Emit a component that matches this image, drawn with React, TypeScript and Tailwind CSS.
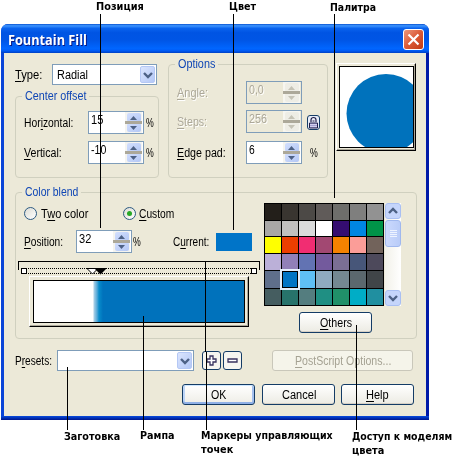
import React, { useLayoutEffect, useRef, useState } from "react";

/* Text squeezed to a given width; "&" marks the underlined mnemonic letter. */
function Fit({ w, children, className = "" }: { w: number; children: string; className?: string }) {
  const ref = useRef<HTMLSpanElement>(null);
  const [scale, setScale] = useState(1);
  useLayoutEffect(() => {
    if (ref.current) setScale(w / ref.current.offsetWidth);
  }, [w]);
  const i = children.indexOf("&");
  return (
    <span className={"block shrink-0 whitespace-nowrap " + className} style={{ width: w }}>
      <span ref={ref} className="inline-block origin-left" style={{ transform: `scaleX(${scale})` }}>
        {i < 0 ? (
          children
        ) : (
          <>
            {children.slice(0, i)}
            <span className="underline decoration-1 underline-offset-[2px]">{children[i + 1]}</span>
            {children.slice(i + 2)}
          </>
        )}
      </span>
    </span>
  );
}

function Chevron({ up = false }: { up?: boolean }) {
  return (
    <svg width="10" height="8" viewBox="0 0 10 8" fill="none" stroke="#4d6185" strokeWidth="2.4">
      <path d={up ? "M1 6 L5 2 L9 6" : "M1 2 L5 6 L9 2"} />
    </svg>
  );
}

function Combo({ className, children }: { className: string; children?: React.ReactNode }) {
  return (
    <div className={"flex h-[21px] shrink-0 items-center justify-between border border-[#7f9db9] bg-white p-px pl-1 " + className}>
      <span>{children}</span>
      <span className="flex h-[17px] w-[15px] items-center justify-center rounded-[2px] border border-[#b5c8f5] bg-linear-to-br from-[#dbe5fe] to-[#b4c8f6]">
        <Chevron />
      </span>
    </div>
  );
}

function Spinner({ value, w, disabled = false }: { value: string; w: number; disabled?: boolean }) {
  const btn =
    "flex h-[9px] w-[14px] items-center justify-center rounded-[2px] " +
    (disabled ? "bg-[#eeede5]" : "bg-linear-to-br from-[#d3dffd] to-[#b3c7f5]");
  const fill = disabled ? "#c5c3b6" : "#4d6185";
  return (
    <div
      className={
        "flex h-[23px] w-[56px] shrink-0 justify-between border border-[#7f9db9] pl-[2px] pr-px " +
        (disabled ? "bg-[#ece9d8] text-[#aca899]" : "bg-white")
      }
    >
      <Fit w={w} className="leading-[16px]">{value}</Fit>
      <div className={"flex w-[17px] flex-col items-center justify-between py-px " + (disabled ? "bg-[#f7f6f0]" : "bg-[#f4f4f0]")}>
        <span className={btn}>
          <svg width="7" height="4" viewBox="0 0 7 4"><path d="M0 4 L3.5 0 L7 4Z" fill={fill} /></svg>
        </span>
        <span className="z-10 -my-1 h-[3px] w-[17px] shrink-0 bg-[#aca899]" />
        <span className={btn}>
          <svg width="7" height="4" viewBox="0 0 7 4"><path d="M0 0 L3.5 4 L7 0Z" fill={fill} /></svg>
        </span>
      </div>
    </div>
  );
}

function Group({ title, w, className, children }: { title: string; w: number; className: string; children: React.ReactNode }) {
  return (
    <div className={"flex shrink-0 flex-col rounded-[4px] border border-[#d0d0bf] " + className}>
      <div className="-mt-[9px] ml-[6px] h-4 self-start bg-[#ece9d8] px-[3px] leading-4 text-[#0f46b5]">
        <Fit w={w}>{title}</Fit>
      </div>
      {children}
    </div>
  );
}

function Button({ label, w, kind = "", className }: { label: string; w: number; kind?: string; className: string }) {
  const look =
    kind === "disabled"
      ? "border-[#c9c7ba] bg-[#f5f4ea] text-[#a5a293]"
      : kind === "default"
        ? "border-[#143c66] bg-linear-to-b from-white to-[#eeede6] shadow-[inset_0_-2px_0_#8fb0e6,inset_0_1px_0_#cee7ff,inset_2px_0_0_#bcd4f6,inset_-2px_0_0_#a4c0ee]"
        : "border-[#143c66] bg-linear-to-b from-white to-[#ecebe3] shadow-[inset_0_-1px_0_#d6d0c5]";
  return (
    <button className={"flex shrink-0 items-center justify-center rounded-[3px] border " + look + " " + className}>
      <Fit w={w}>{label}</Fit>
    </button>
  );
}

function Radio({ on = false }: { on?: boolean }) {
  return (
    <span className="flex size-[13px] shrink-0 items-center justify-center rounded-full border border-[#2c5a82] bg-linear-to-br from-[#dcdcd4] to-white">
      {on && <span className="size-[5px] rounded-full bg-[#27a827]" />}
    </span>
  );
}

const palette = [
  "bg-[#231f1a]", "bg-[#393530]", "bg-[#4c4946]", "bg-[#605b59]", "bg-[#6e6e6b]", "bg-[#7f7f7e]", "bg-[#929292]",
  "bg-[#a8a7a6]", "bg-[#c1c0bf]", "bg-[#dadbdb]", "bg-[#ffffff]", "bg-[#350d70]", "bg-[#0086e2]", "bg-[#009348]",
  "bg-[#ffff00]", "bg-[#ec3e00]", "bg-[#f12d72]", "bg-[#a24872]", "bg-[#f58200]", "bg-[#fb9d98]", "bg-[#72635b]",
  "bg-[#bbb0d8]", "bg-[#9180b8]", "bg-[#6273b3]", "bg-[#735a9d]", "bg-[#7b6f94]", "bg-[#475679]", "bg-[#4d495b]",
  "bg-[#5f6f8b]", "bg-[#0074c4]", "bg-[#5fc0f5]", "bg-[#8fabc0]", "bg-[#748892]", "bg-[#5b686e]", "bg-[#404548]",
  "bg-[#455d60]", "bg-[#27736b]", "bg-[#547d7f]", "bg-[#1f8f83]", "bg-[#209069]", "bg-[#00adc6]", "bg-[#208fa0]",
];

const leaders = [
  "left-[100px] top-[14px] h-[214px]",
  "left-[233px] top-[14px] h-[216px]",
  "left-[334px] top-[14px] h-[184px]",
  "left-[67px] top-[367px] h-[63px]",
  "left-[143px] top-[316px] h-[114px]",
  "left-[205px] top-[261px] h-[91px]",
  "left-[206px] top-[352px] h-[78px]",
  "left-[356px] top-[325px] h-[105px]",
];

export default function App() {
  return (
    <div className="relative h-[459px] w-[456px] overflow-hidden bg-white font-['Liberation_Sans',Arial,sans-serif] text-[12px] leading-[14px] text-black">
      <div className="flex h-[24px] pl-[96px] font-['DejaVu_Sans',sans-serif] text-[11px] font-bold">
        <Fit w={48}>Позиция</Fit>
        <Fit w={27} className="ml-[85px]">Цвет</Fit>
        <Fit w={46} className="ml-[74px] mt-px">Палитра</Fit>
      </div>

      <div className="ml-px flex h-[396px] w-[428px] flex-col overflow-hidden rounded-t-[7px] bg-linear-to-r from-[#0a45d8] via-[#0855dd] to-[#0019a8]">
        <div className="flex h-[29px] shrink-0 items-center justify-between bg-linear-[180deg,#0a52cf_0%,#3d95ff_6%,#0a63ee_15%,#0054e3_30%,#0055e5_55%,#0066ff_85%,#005bf5_92%,#0040c4_100%] pl-[7px] pr-[5px]">
          <Fit w={79} className="mt-[3px] font-['Open_Sans',sans-serif] text-[14px] font-bold text-white [text-shadow:1px_1px_#0a1883]">Fountain Fill</Fit>
          <span className="mt-[2px] flex size-[21px] items-center justify-center rounded-[3px] border border-white bg-linear-to-br from-[#e8967c] via-[#dc5a36] to-[#c03a10]">
            <svg width="13" height="13" viewBox="0 0 13 13" stroke="#fff" strokeWidth="2.2"><path d="M1.5 1.5 L11.5 11.5 M11.5 1.5 L1.5 11.5" /></svg>
          </span>
        </div>

        <div className="mx-[3px] h-[363px] shrink-0 bg-[#ece9d8]">
          <div className="flex h-[128px] pl-[11px] pt-[10px]">
            <div className="w-[144px] pt-px">
              <div className="flex items-center">
                <Fit w={27} className="mr-[10px]">&Type:</Fit>
                <Combo className="w-[105px]"><Fit w={31}>Radial</Fit></Combo>
              </div>
              <Group title="Center offset" w={61} className="mt-[11px] h-[82px] w-[144px]">
                <div className="mt-[7px] flex items-center pl-[8px]">
                  <Fit w={49} className="mr-[15px]">Hor&izontal:</Fit>
                  <Spinner value="15" w={12} />
                  <Fit w={8} className="ml-[2px]">%</Fit>
                </div>
                <div className="mt-[7px] flex items-center pl-[8px]">
                  <Fit w={38} className="mr-[26px]">&Vertical:</Fit>
                  <Spinner value="-10" w={15} />
                  <Fit w={8} className="ml-[2px]">%</Fit>
                </div>
              </Group>
            </div>

            <Group title="Options" w={37} className="ml-[9px] mt-px h-[114px] w-[160px]">
              <div className="mt-[9px] flex items-center pl-[8px] text-[#aca899] [text-shadow:1px_1px_#fff]">
                <Fit w={31} className="mr-[38px]">&Angle:</Fit>
                <Spinner value="0,0" w={15} disabled />
              </div>
              <div className="mt-[6px] flex items-center pl-[8px] text-[#aca899] [text-shadow:1px_1px_#fff]">
                <Fit w={30} className="mr-[39px]">&Steps:</Fit>
                <Spinner value="256" w={18} disabled />
                <span className="ml-[5px] mt-px flex h-[15px] w-[13px] items-center justify-center rounded-[3px] border border-[#163d66] bg-[#e8ecf8]">
                  <svg width="11" height="13" viewBox="0 0 11 13" fill="none" stroke="#22204a">
                    <path d="M3 6 V4 a2.5 2.5 0 0 1 5 0 V6" strokeWidth="1.2" />
                    <path d="M4.5 5 h2" />
                    <path d="M1.5 12 V7 h8 V12Z" fill="#a5a2d0" />
                    <path d="M2 8.5 h7 M2 10.5 h7" stroke="#e6e4fa" strokeWidth=".7" />
                  </svg>
                </span>
              </div>
              <div className="mt-[8px] flex items-center pl-[8px]">
                <Fit w={49} className="mr-[20px]">&Edge pad:</Fit>
                <Spinner value="6" w={6} />
                <Fit w={8} className="ml-[8px]">%</Fit>
              </div>
            </Group>

            <div className="ml-[8px] h-[88px] w-[80px] shrink-0 border border-b-black border-l-white border-r-black border-t-white p-px shadow-[inset_-1px_-1px_#aca899]">
              <div className="ml-px mt-px h-[82px] w-[75px] border border-black bg-white">
                <svg width="73" height="80" viewBox="0 0 73 80"><circle cx="46" cy="46.5" r="39.5" fill="#0072bc" /></svg>
              </div>
            </div>
          </div>

          <Group title="Color blend" w={53} className="ml-[11px] mt-[11px] h-[147px] w-[402px]">
            <div className="flex pt-[2px]">
              <div className="w-[248px]">
                <div className="mt-[4px] flex h-[15px] items-center pl-[8px]">
                  <Radio />
                  <Fit w={47} className="ml-[4px] mr-[35px]">T&wo color</Fit>
                  <Radio on />
                  <Fit w={35} className="ml-[3px] mt-px">&Custom</Fit>
                </div>
                <div className="mt-[9px] flex items-center pl-[8px]">
                  <Fit w={39} className="mr-[13px]">&Position:</Fit>
                  <Spinner value="32" w={12} />
                  <Fit w={8} className="ml-px">%</Fit>
                  <Fit w={36} className="ml-[32px] mr-[7px]">C&urrent:</Fit>
                  <span className="h-[18px] w-[36px] bg-[#0074c8]" />
                </div>
                <svg className="ml-[2px] mt-[8px]" width="243" height="15" viewBox="0 0 243 15" shapeRendering="crispEdges">
                  <path d="M0.5 9 V0.5 H241.5 V9" fill="none" stroke="#000" />
                  <path d="M8 7.5 H233 M8 12.5 H233" stroke="#000" strokeDasharray="1 1" />
                  <rect x="3.5" y="7.5" width="5" height="5" fill="#fff" stroke="#000" />
                  <rect x="233.5" y="7.5" width="5" height="5" fill="#fff" stroke="#000" />
                  <path d="M69 7.5 H80 L74.5 13Z" fill="#fff" stroke="#000" shapeRendering="auto" />
                  <path d="M76 7 H89 L82.5 13.5Z" fill="#000" shapeRendering="auto" />
                </svg>
                <div className="ml-[13px] h-[51px] w-[220px] border border-b-black border-l-white border-r-black border-t-white p-[3px] shadow-[inset_-1px_-1px_#aca899]">
                  <div className="h-[43px] w-[212px] border border-black bg-linear-[90deg,#fff_0,#fff_59px,#a9cfe6_60px,#55a9d8_63px,#078ccb_65px,#0072bc_69px]" />
                </div>
              </div>

              <div className="mt-px w-[140px]">
                <div className="flex">
                  <div className="grid h-[103px] w-[120px] grid-cols-7 gap-px border border-black bg-black">
                    {palette.map((c, i) => (
                      <span key={c} className={c + (i === 29 ? " z-10 border border-black outline-2 outline-[#e4eefa]" : "")} />
                    ))}
                  </div>
                  <div className="ml-px flex h-[103px] w-[16px] flex-col bg-linear-to-r from-[#f2f1e9] to-white">
                    <span className="flex h-[16px] items-center justify-center rounded-[3px] border border-[#a9bff2] bg-[#c5d5fb]"><Chevron up /></span>
                    <span className="mt-px flex h-[27px] flex-col items-center justify-center gap-px rounded-[3px] border border-[#a0b8ee] bg-linear-to-r from-[#cbd9fd] to-[#b9ccf8]">
                      <i className="h-px w-[7px] bg-[#edf3ff]" />
                      <i className="h-px w-[7px] bg-[#edf3ff]" />
                      <i className="h-px w-[7px] bg-[#edf3ff]" />
                      <i className="h-px w-[7px] bg-[#edf3ff]" />
                    </span>
                    <span className="mt-auto flex h-[16px] items-center justify-center rounded-[3px] border border-[#a9bff2] bg-[#c5d5fb]"><Chevron /></span>
                  </div>
                </div>
                <Button label="&Others" w={32} className="ml-[35px] mt-[6px] h-[21px] w-[73px]" />
              </div>
            </div>
          </Group>

          <div className="mt-[11px] flex items-center pl-[11px]">
            <Fit w={37} className="mr-[5px]">P&resets:</Fit>
            <Combo className="w-[137px]" />
            <span className="ml-[8px] flex h-[19px] w-[19px] items-center justify-center rounded-[3px] border border-[#143c66] bg-[#f6f5f0]">
              <svg width="11" height="11" viewBox="0 0 11 11"><path d="M4 1 H7 V4 H10 V7 H7 V10 H4 V7 H1 V4 H4Z" fill="#fff" stroke="#38325f" strokeWidth="1.3" /></svg>
            </span>
            <span className="ml-[2px] flex h-[19px] w-[19px] items-center justify-center rounded-[3px] border border-[#143c66] bg-[#f6f5f0]">
              <svg width="11" height="5" viewBox="0 0 11 5"><path d="M1 1 H10 V4 H1Z" fill="#fff" stroke="#38325f" strokeWidth="1.3" /></svg>
            </span>
            <Button label="&PostScript Options..." w={96} kind="disabled" className="ml-[30px] h-[21px] w-[141px]" />
          </div>

          <div className="mt-[13px] flex pl-[178px]">
            <Button label="OK" w={15} kind="default" className="h-[21px] w-[73px]" />
            <Button label="Cancel" w={34} className="ml-[7px] h-[21px] w-[73px]" />
            <Button label="&Help" w={23} className="ml-[6px] h-[21px] w-[73px]" />
          </div>
        </div>
        <div className="h-[4px] shrink-0 bg-linear-to-b from-[#0a4be0] to-[#00138c]" />
      </div>

      <div className="flex pl-[64px] pt-[9px] font-['DejaVu_Sans',sans-serif] text-[11px] font-bold">
        <Fit w={56} className="mt-px">Заготовка</Fit>
        <Fit w={35} className="ml-[20px]">Рампа</Fit>
        <div className="ml-[26px]">
          <Fit w={132}>Маркеры управляющих</Fit>
          <Fit w={32}>точек</Fit>
        </div>
        <div className="ml-[19px] mt-px">
          <Fit w={100}>Доступ к моделям</Fit>
          <Fit w={32}>цвета</Fit>
        </div>
      </div>

      {leaders.map((c) => (
        <span key={c} className={"absolute z-20 w-px bg-black " + c} />
      ))}
    </div>
  );
}
